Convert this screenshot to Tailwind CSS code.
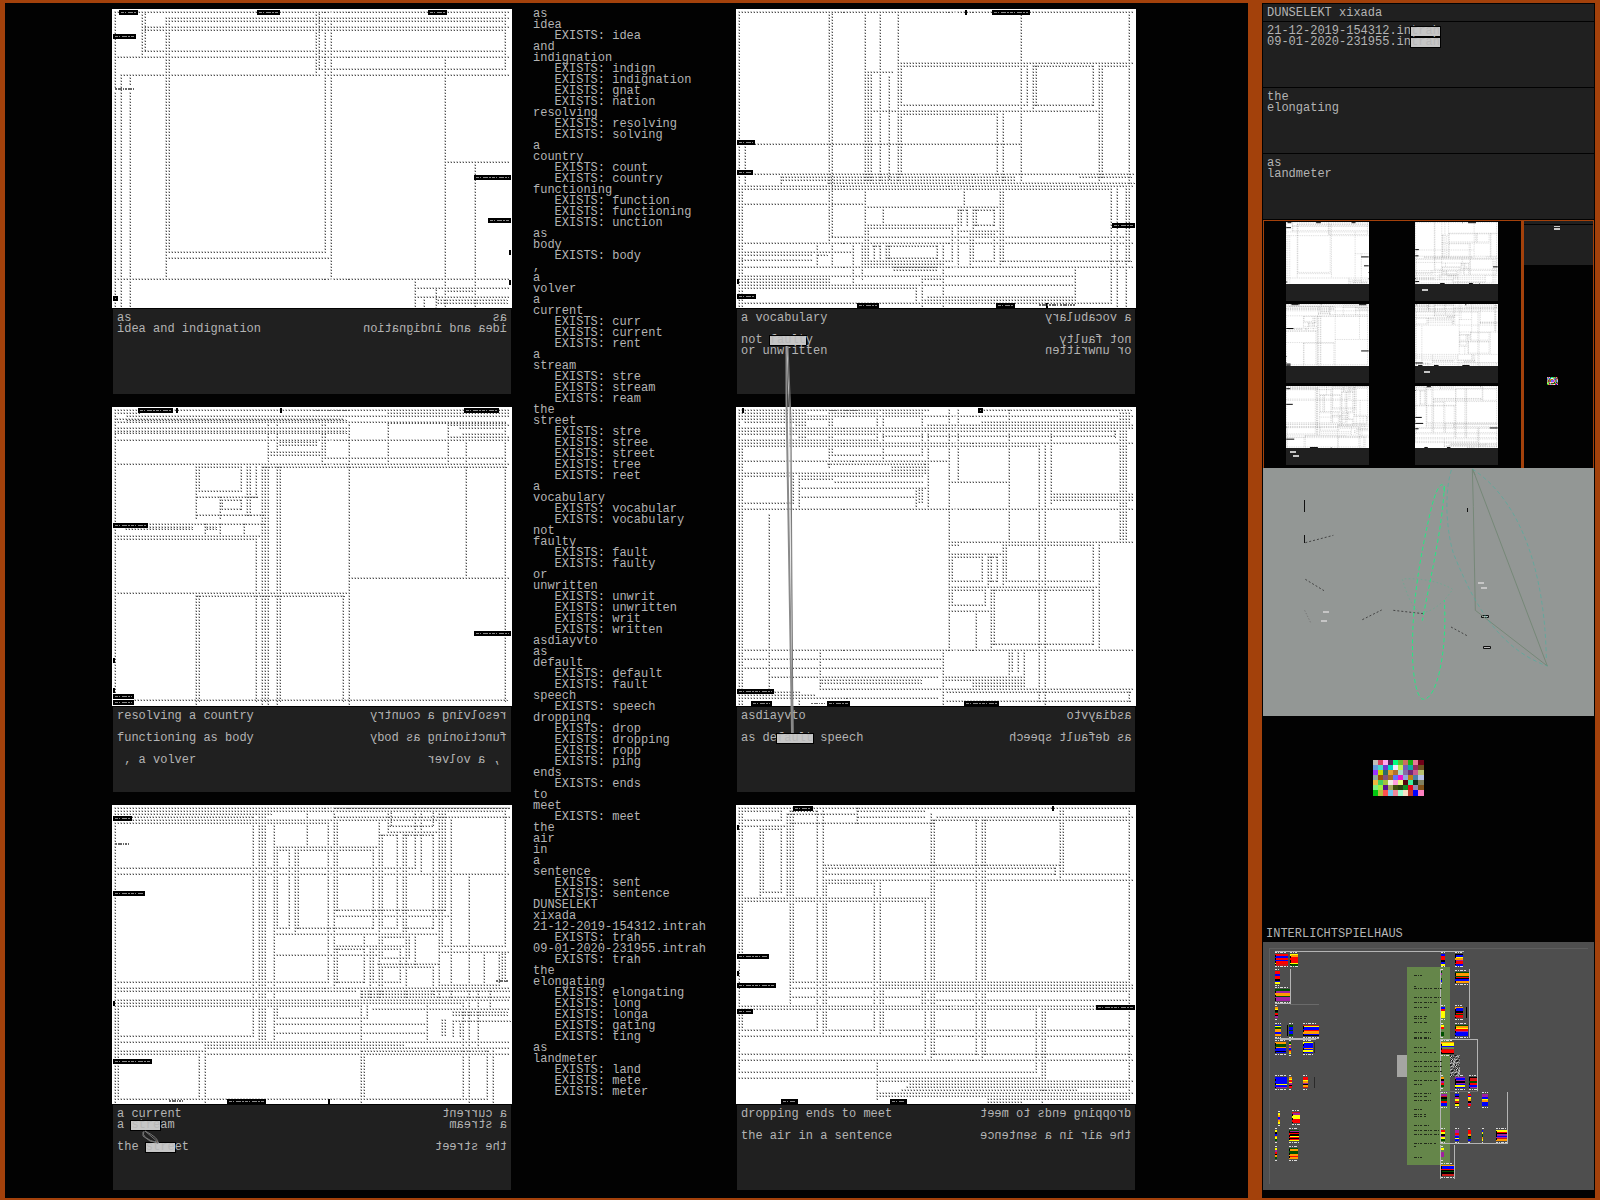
<!DOCTYPE html>
<html lang="en">
<head>
<meta charset="utf-8">
<title>DUNSELEKT xixada</title>
<script src="https://cdn.jsdelivr.net/npm/@tailwindcss/browser@4"></script>
</head>
<body class="bg-[#a3410b] min-h-screen flex gap-[14px] pt-[3px] pb-[2px] pl-[5px] pr-[5px] font-['Liberation_Mono',monospace] text-[12px] leading-[11px] text-[#b4b4b4]">

<main class="relative flex-1 bg-[#020202] flex pt-[6px] pl-[107px]">
  <div class="w-[400px] shrink-0 flex flex-col gap-[13px]">
    <section>
      <svg data-plan="0" class="block w-full h-[299px] bg-white" viewBox="36 27 1200 897"></svg>
      <div class="mt-px mx-px h-[85px] bg-[#202020] p-1 flex justify-between">
<pre class="font-[inherit]">as
idea and indignation</pre>
<pre class="font-[inherit] -scale-x-100">as
idea and indignation</pre>
      </div>
    </section>
    <section>
      <svg data-plan="1" class="block w-full h-[299px] bg-white" viewBox="36 21 1200 897"></svg>
      <div class="mt-px mx-px h-[85px] bg-[#202020] p-1 flex justify-between">
<pre class="font-[inherit]">resolving a country

functioning as body

 , a volver</pre>
<pre class="font-[inherit] -scale-x-100">resolving a country

functioning as body

 , a volver</pre>
      </div>
    </section>
    <section>
      <svg data-plan="2" class="block w-full h-[299px] bg-white" viewBox="36 15 1200 897"></svg>
      <div class="mt-px mx-px h-[85px] bg-[#202020] p-1 flex justify-between">
<pre class="font-[inherit]">a current
a <mark class="inline-block h-[11px] align-top -mx-px px-px border-y border-black outline-1 -outline-offset-1 outline-black bg-[#c6c6c6] text-[#b8b8b8] leading-[9px]">stre</mark>am

the <mark class="inline-block h-[11px] align-top -mx-px px-px border-y border-black outline-1 -outline-offset-1 outline-black bg-[#c6c6c6] text-[#b8b8b8] leading-[9px]">stre</mark>et</pre>
<pre class="font-[inherit] -scale-x-100">a current
a stream

the street</pre>
      </div>
    </section>
  </div>

<pre class="font-[inherit] w-[224px] shrink-0 pl-[21px]">as
idea
   EXISTS: idea
and
indignation
   EXISTS: indign
   EXISTS: indignation
   EXISTS: gnat
   EXISTS: nation
resolving
   EXISTS: resolving
   EXISTS: solving
a
country
   EXISTS: count
   EXISTS: country
functioning
   EXISTS: function
   EXISTS: functioning
   EXISTS: unction
as
body
   EXISTS: body
,
a
volver
a
current
   EXISTS: curr
   EXISTS: current
   EXISTS: rent
a
stream
   EXISTS: stre
   EXISTS: stream
   EXISTS: ream
the
street
   EXISTS: stre
   EXISTS: stree
   EXISTS: street
   EXISTS: tree
   EXISTS: reet
a
vocabulary
   EXISTS: vocabular
   EXISTS: vocabulary
not
faulty
   EXISTS: fault
   EXISTS: faulty
or
unwritten
   EXISTS: unwrit
   EXISTS: unwritten
   EXISTS: writ
   EXISTS: written
asdiayvto
as
default
   EXISTS: default
   EXISTS: fault
speech
   EXISTS: speech
dropping
   EXISTS: drop
   EXISTS: dropping
   EXISTS: ropp
   EXISTS: ping
ends
   EXISTS: ends
to
meet
   EXISTS: meet
the
air
in
a
sentence
   EXISTS: sent
   EXISTS: sentence
DUNSELEKT
xixada
21-12-2019-154312.intrah
   EXISTS: trah
09-01-2020-231955.intrah
   EXISTS: trah
the
elongating
   EXISTS: elongating
   EXISTS: long
   EXISTS: longa
   EXISTS: gating
   EXISTS: ting
as
landmeter
   EXISTS: land
   EXISTS: mete
   EXISTS: meter</pre>

  <div class="w-[400px] shrink-0 flex flex-col gap-[13px]">
    <section>
      <svg data-plan="3" class="block w-full h-[299px] bg-white" viewBox="33 27 1200 897"></svg>
      <div class="mt-px mx-px h-[85px] bg-[#202020] p-1 flex justify-between">
<pre class="font-[inherit]">a vocabulary

not <mark class="inline-block h-[11px] align-top -mx-px px-px border-y border-black outline-1 -outline-offset-1 outline-black bg-[#c6c6c6] text-[#b8b8b8] leading-[9px]">fault</mark>y
or unwritten</pre>
<pre class="font-[inherit] -scale-x-100">a vocabulary

not faulty
or unwritten</pre>
      </div>
    </section>
    <section>
      <svg data-plan="4" class="block w-full h-[299px] bg-white" viewBox="33 21 1200 897"></svg>
      <div class="mt-px mx-px h-[85px] bg-[#202020] p-1 flex justify-between">
<pre class="font-[inherit]">asdiayvto

as de<mark class="inline-block h-[11px] align-top -mx-px px-px border-y border-black outline-1 -outline-offset-1 outline-black bg-[#c6c6c6] text-[#b8b8b8] leading-[9px]">fault</mark> speech</pre>
<pre class="font-[inherit] -scale-x-100">asdiayvto

as default speech</pre>
      </div>
    </section>
    <section>
      <svg data-plan="5" class="block w-full h-[299px] bg-white" viewBox="33 15 1200 897"></svg>
      <div class="mt-px mx-px h-[85px] bg-[#202020] p-1 flex justify-between">
<pre class="font-[inherit]">dropping ends to meet

the air in a sentence</pre>
<pre class="font-[inherit] -scale-x-100">dropping ends to meet

the air in a sentence</pre>
      </div>
    </section>
  </div>

  <!-- strings tying equal fragments together -->
  <svg class="absolute left-0 top-0 w-[1200px] h-[1195px] pointer-events-none" viewBox="5 3 1200 1195" fill="none" stroke-width="1">
    <path d="M786.500 346L786.500 400L792 733" stroke="#8a8a8a" stroke-width="2"/>
    <path d="M787 346L790 430L793 733" stroke="#bdbdbd"/>
    <path d="M788 346L791 420L792 600L793 733" stroke="#777"/>
    <path d="M144 1131Q140 1138 158 1143Q159 1138 145 1131M145 1131L159 1143M143 1132V1136L150 1141L158 1143" stroke="#777"/>
  </svg>
</main>

<aside class="w-[333px] shrink-0 bg-[#020202] border border-[#020202] flex flex-col">
  <h1 class="h-[17px] bg-[#202020] pl-1 pt-1 font-normal">DUNSELEKT xixada</h1>
<pre class="font-[inherit] mt-px h-[65px] bg-[#202020] pl-1 pt-1">21-12-2019-154312.in<mark class="inline-block h-[11px] align-top -mx-px px-px border-y border-black outline-1 -outline-offset-1 outline-black bg-[#c6c6c6] text-[#b8b8b8] leading-[9px]">trah</mark>
09-01-2020-231955.in<mark class="inline-block h-[11px] align-top -mx-px px-px border-y border-black outline-1 -outline-offset-1 outline-black bg-[#c6c6c6] text-[#b8b8b8] leading-[9px]">trah</mark></pre>
<pre class="font-[inherit] mt-px h-[65px] bg-[#202020] pl-1 pt-1">the
elongating</pre>
<pre class="font-[inherit] mt-px h-[65px] bg-[#202020] pl-1 pt-1">as
landmeter</pre>

  <div class="mt-px h-[248px] border border-b-0 border-[#a3410b] flex">
    <div class="flex-1 flex pl-[22px] gap-[46px] pt-px" id="minis">
      <div class="w-[83px] flex flex-col gap-[3px]" data-col="0"></div>
      <div class="w-[83px] flex flex-col gap-[3px]" data-col="3"></div>
    </div>
    <div class="w-[72px] border-l-3 border-[#a3410b]">
      <svg class="block w-[69px] h-[246px]" viewBox="0 0 207 738" shape-rendering="crispEdges">
        <path fill="#202020" d="M0 0h207v9H0zM0 12h207v120H0z"/>
        <path fill="#c8c8c8" d="M90 15h18v3H90zM90 21h18v6H90z"/>
        <g id="dots"></g>
      </svg>
    </div>
  </div>

  <svg class="block h-[248px] w-full bg-[#939795]" viewBox="69 24 993 744" fill="none">
    <g stroke="#111" stroke-width="3">
      <path d="M193.500 120V156M193.500 225V249M682.500 144V156"/>
      <path stroke="#444" stroke-dasharray="6 6" d="M196 248L280 226M196 358L252 392M367 479L425 450M633 501L681 527M460 451L550 461"/>
      <path stroke="#777" stroke-dasharray="4 5" d="M194 451L212 488"/>
      <path fill="#bbb" d="M724.500 466.500h21v6h-21zM730.500 559.500h21v6h-21z"/>
    </g>
    <path fill="#c6c6c6" d="M249 453h18v6h-18zM243 480h18v6h-18zM714 366h18v6h-18zM723 381h18v6h-18z"/>
    <path stroke="#768878" stroke-width="3" d="M698 27L922 618L706 451L700 140L697 27L705 45"/>
    <g stroke="#4fae9f" stroke-width="2" stroke-dasharray="12 8">
      <path d="M697 27C840 120 915 330 919 600M634 30C610 110 622 220 640 280C690 400 760 560 922 618"/>
      <path stroke="#62ac91" stroke-dasharray="5 7" d="M487 358C500 400 520 460 550 458C590 450 620 415 638 388C610 370 550 352 487 357"/>
    </g>
    <g stroke="#25e884" stroke-width="3" stroke-dasharray="12 8">
      <path d="M613 95C612 60 595 65 575 140C525 350 515 480 518 600C523 690 538 718 551 718C590 716 622 580 613 420"/>
      <path d="M613 78C608 200 570 360 547 482"/>
    </g>
  </svg>

  <div class="relative h-[226px]">
    <svg class="absolute left-[110px] top-[44px] w-[51px] h-[36px]" viewBox="0 0 51 36" shape-rendering="crispEdges" id="palette"></svg>
    <h2 class="absolute left-[3px] bottom-[2px] font-normal leading-[11px]">INTERLICHTSPIELHAUS</h2>
  </div>

  <svg class="block h-[248px] w-full bg-[#4e4e4e]" viewBox="69 66 993 744" shape-rendering="crispEdges" fill="none" id="map">
    <path stroke="#5e5e5e" stroke-width="3" d="M88.500 792V85.500H1044"/>
    <path fill="#65864a" d="M501 141h129v594H501z"/>
    <path fill="#a5a5a3" d="M471 405h30v66h-30z"/>
    <path stroke="#b4b4b4" stroke-width="3" d="M105 94.500H672M151.500 147V250.500H105M601.500 147V354M688.500 147V354M712.500 513V358.500H601.500V513M601.500 516V670.500H802.500V516M601.500 675V777M643.500 675V777M105 355.500H237M120 358.500H228"/>
    <path stroke="#6a6a6a" stroke-width="3" d="M150 253.500H237M603 514.500H714"/>
    <path stroke="#000" stroke-width="3" d="M142.500 315V348M679.500 261V294"/>
    <path stroke="#2a2a2a" stroke-width="3" d="M223.500 366V399M223.500 471V504"/>
  </svg>
</aside>

<script>
// Floor plans: h = [y, x1, x2], v = [x, y1, y2], tags = [x, y, width]; three units per pixel.
const plans = [
{h:[[36,45,1227],[54,198,1227],[62,198,1215],[81,126,1227],[90,134,1215],[153,134,1215],[171,45,1227],[207,656,1215],[225,63,660],[225,675,1227],[486,1035,1227],[755,207,675],[774,198,693],[837,45,1227],[864,945,1227],[873,1035,1125],[891,945,1227],[899,1015,1218],[909,1015,1218]],
 v:[[45,36,260],[45,280,920],[63,225,920],[90,225,255],[90,280,920],[126,36,165],[134,42,153],[198,63,830],[207,63,755],[648,36,220],[656,42,207],[675,63,755],[693,54,830],[1035,171,920],[1125,486,920],[1215,36,207],[945,837,920],[972,891,920],[1008,870,920]],
 tags:[[57,30,57],[471,30,69],[984,30,57],[39,102,69],[1122,525,110],[1164,654,68],[1227,750,6],[1227,840,6],[39,888,15]],tiny:[[45,267,60]]},
{h:[[31,45,1227],[39,45,120],[39,865,1227],[48,81,1227],[57,50,730],[60,81,735],[66,45,1215],[69,865,1215],[75,1045,1227],[84,45,745],[84,1080,1215],[93,45,735],[100,45,735],[102,1090,1215],[111,1045,1227],[121,45,1227],[127,540,650],[136,540,650],[156,504,670],[165,504,660],[174,675,1215],[192,45,1227],[200,490,1215],[272,297,423],[291,290,470],[299,367,423],[327,367,423],[346,290,490],[373,150,490],[381,78,272],[388,78,272],[381,320,345],[388,320,345],[408,45,490],[416,45,470],[535,747,1227],[579,45,747],[588,290,730],[901,105,1218],[200,297,423],[290,450,468]],
 v:[[45,31,915],[288,200,357],[288,588,915],[297,588,900],[468,416,900],[486,192,915],[495,200,900],[504,66,180],[504,200,915],[531,66,165],[531,200,915],[540,200,900],[729,588,900],[747,66,915],[864,66,192],[1044,66,192],[1098,121,530],[1215,66,900],[666,66,192],[675,75,174],[360,291,357],[441,200,346],[297,200,272],[423,200,272],[450,200,346],[468,200,290],[367,299,327],[423,299,327],[315,373,400],[360,373,400],[432,373,400]],
 tags:[[114,24,105],[228,24,6],[540,24,6],[1092,24,105],[39,369,105],[1122,693,110],[39,774,6],[39,864,6],[39,883,63],[39,900,63]],tiny:[[640,31,100]]},
{h:[[24,45,1227],[24,705,1227],[32,45,1215],[43,45,510],[50,95,460],[50,705,1227],[60,45,1035],[68,45,685],[78,870,1000],[96,865,1020],[104,843,890],[104,915,1000],[142,522,835],[150,530,567],[150,594,820],[204,45,945],[222,45,1227],[329,709,1035],[348,702,1050],[384,530,567],[384,592,820],[384,845,890],[384,915,1000],[402,522,1020],[411,845,930],[438,702,915],[438,1025,1215],[447,709,790],[447,820,900],[456,1018,1227],[465,522,835],[473,845,930],[493,835,1015],[501,845,1000],[546,45,685],[546,709,790],[546,820,900],[555,1018,1200],[564,45,1227],[572,45,765],[573,785,1227],[582,785,1000],[591,785,1227],[600,45,1227],[608,45,1090],[618,45,785],[627,820,1227],[636,1060,1218],[645,1060,1218],[654,530,800],[663,1060,1227],[672,522,985],[699,522,985],[708,55,460],[726,45,1227],[735,315,910],[744,315,1227],[753,45,315],[753,785,1165],[762,55,297],[762,315,1227],[896,55,1165]],
 v:[[45,24,910],[53,610,896],[459,50,708],[477,43,720],[486,43,720],[495,43,720],[522,60,720],[531,150,384],[531,608,654],[567,150,384],[585,142,400],[594,150,384],[621,32,142],[684,68,546],[702,43,555],[711,60,329],[711,447,546],[792,402,546],[810,447,590],[819,150,384],[819,447,546],[837,60,590],[846,104,384],[846,411,473],[846,501,580],[864,32,96],[873,40,78],[891,104,384],[900,447,546],[909,104,402],[918,104,600],[927,411,473],[945,32,204],[945,402,490],[963,32,220],[999,40,78],[999,104,384],[999,501,580],[1018,32,600],[1026,32,438],[1035,32,329],[1053,60,600],[1107,222,910],[1152,456,555],[1197,456,555],[1206,462,540],[1215,32,438],[1215,462,540],[1089,608,896],[783,564,910],[792,762,896],[801,608,654],[315,735,910],[297,762,896],[1161,753,896],[1179,753,910],[981,608,720],[1134,573,740],[1035,660,708],[1026,660,708],[1060,672,708],[1080,672,708],[1170,573,625]],
 tags:[[39,47,57],[39,273,95],[39,603,6],[39,777,116],[382,897,115],[685,897,6]],tiny:[[45,131,42],[207,903,42],[1188,543,36]]},
{h:[[36,42,1225],[189,519,1225],[198,528,905],[198,930,1105],[198,1130,1215],[216,420,505],[315,528,905],[315,930,1105],[333,420,1120],[342,528,815],[432,90,885],[522,90,1225],[531,175,870],[531,1065,1215],[540,175,870],[549,310,1225],[558,42,1225],[566,50,1160],[612,50,420],[621,420,830],[630,705,727],[630,750,805],[675,420,700],[675,750,805],[684,428,682],[693,700,830],[702,745,805],[711,320,1205],[729,42,1225],[737,445,465],[737,490,637],[756,42,380],[765,50,260],[765,280,303],[780,50,260],[773,490,637],[783,428,682],[783,745,805],[783,832,1215],[792,420,655],[801,42,1225],[800,508,637],[810,508,637],[828,42,1050],[836,42,315],[846,42,315],[837,590,655],[855,42,1050],[864,42,575],[891,608,1050],[900,590,1050],[908,42,1160]],
 v:[[42,36,920],[51,566,920],[312,36,725],[320,42,711],[420,36,540],[420,566,790],[429,216,540],[438,216,540],[465,36,540],[492,230,540],[519,36,540],[528,198,315],[528,342,522],[60,432,550],[474,621,675],[168,531,550],[276,729,795],[321,729,795],[384,729,860],[411,729,835],[429,684,783],[447,737,783],[465,737,783],[483,729,795],[492,737,773],[573,864,908],[591,837,920],[637,737,773],[655,729,920],[682,684,783],[699,621,790],[709,630,675],[727,630,675],[717,566,621],[735,693,795],[744,621,693],[744,702,783],[753,630,675],[807,630,675],[807,702,783],[816,342,522],[825,558,795],[834,342,540],[834,566,783],[888,36,540],[906,198,315],[924,189,325],[933,198,315],[1104,198,315],[1122,189,540],[1130,198,531],[1158,566,908],[1176,566,920],[1203,566,920],[1212,36,783],[1050,801,900]],
 tags:[[720,30,6],[800,30,115],[36,420,53],[36,510,48],[1161,669,68],[36,836,6],[36,882,57],[396,909,66],[813,909,57],[963,909,6]],tiny:[[942,915,108]]},
{h:[[31,42,612],[31,778,1215],[39,42,225],[39,320,460],[39,475,590],[48,42,1225],[57,42,310],[66,60,215],[66,770,1215],[75,610,1225],[84,42,1225],[93,42,1170],[101,42,455],[109,475,590],[109,610,1170],[120,42,460],[129,42,1225],[137,50,940],[165,320,590],[183,50,672],[192,310,600],[201,500,600],[210,500,600],[219,42,600],[228,50,205],[228,222,590],[237,222,325],[246,330,590],[246,672,850],[265,222,610],[292,222,570],[308,50,205],[327,42,1225],[283,978,1225],[292,978,1225],[300,978,1225],[426,672,1225],[435,680,700],[435,843,1105],[463,672,835],[471,680,770],[471,795,815],[543,680,770],[543,795,815],[543,843,1105],[561,672,1120],[570,680,780],[570,805,1105],[615,680,780],[633,672,800],[732,805,1105],[750,42,1225],[777,42,655],[804,42,655],[831,132,640],[831,655,900],[840,290,585],[849,290,585],[840,655,900],[849,745,900],[858,745,900],[867,285,1225],[876,50,220],[876,665,1215],[885,50,270],[894,50,640],[902,665,1215]],
 v:[[42,31,915],[51,137,915],[132,345,867],[204,228,308],[213,39,84],[222,39,110],[222,228,320],[222,876,915],[231,31,110],[240,31,110],[312,31,205],[321,39,165],[456,39,110],[474,31,180],[591,39,165],[285,759,867],[573,265,320],[582,270,308],[591,270,308],[610,84,320],[600,183,219],[672,31,745],[699,31,245],[753,633,745],[771,471,543],[789,463,561],[798,471,543],[816,471,543],[680,471,543],[680,570,615],[780,570,615],[798,561,745],[807,570,732],[834,426,555],[843,435,543],[852,31,426],[852,750,831],[861,759,815],[879,759,815],[897,759,867],[942,137,902],[960,129,915],[978,84,310],[1104,435,543],[1104,570,732],[1122,426,745],[1170,93,109],[1185,39,426],[1194,39,426],[1203,39,426],[1212,39,84],[1212,876,902],[655,759,915]],
 tags:[[50,24,6],[759,24,15],[36,867,110],[78,903,63],[307,903,67],[717,903,105]],tiny:[[315,31,90],[258,910,42]]},
{h:[[23,42,1215],[32,50,168],[32,200,275],[32,400,600],[42,190,395],[50,400,600],[50,635,1225],[60,50,168],[60,625,755],[60,778,1005],[60,1013,1215],[69,200,620],[78,42,190],[87,113,168],[195,300,1000],[204,302,990],[222,302,990],[222,1013,1215],[240,294,1225],[249,302,447],[275,113,168],[294,42,620],[303,42,600],[546,204,1215],[555,465,1225],[564,195,1225],[573,600,1215],[591,195,590],[600,600,1215],[618,42,1225],[626,50,935],[626,960,1215],[690,50,275],[690,302,447],[690,475,1215],[708,42,1225],[762,42,600],[762,625,755],[762,778,1215],[780,42,1225],[816,42,935],[834,42,950],[843,456,1225],[852,555,1055],[852,1058,1215],[861,545,1055],[861,1058,1215],[870,530,1055],[879,456,1225],[888,456,1215],[897,790,1215],[906,790,890]],
 v:[[42,23,815],[51,32,460],[51,626,690],[105,87,290],[113,87,275],[168,32,60],[168,87,275],[186,42,290],[195,32,605],[204,32,546],[276,32,690],[294,23,700],[303,204,222],[303,249,690],[395,23,69],[447,249,690],[465,240,700],[474,564,690],[600,303,762],[618,42,775],[627,60,762],[753,60,762],[771,50,775],[780,60,762],[933,626,816],[951,618,910],[960,626,897],[1005,23,235],[1013,32,222],[1212,23,897],[456,780,897],[591,564,615],[990,204,222]],
 tags:[[204,18,59],[982,18,6],[36,74,6],[36,462,95],[36,513,6],[36,549,116],[36,627,48],[1113,615,116],[168,897,50],[495,897,50]],tiny:[]}
];
const snap = n => Math.round(n / 3) * 3;
function lines(p) {
  return p.h.map(([y, a, b]) => `M${snap(a) - 3} ${snap(y)}H${snap(b) + 3}`).join('') +
         p.v.map(([x, a, b]) => `M${snap(x)} ${snap(a) - 3}V${snap(b) + 3}`).join('');
}
function draw(p, ox) {
  const d = lines(p);
  let s = `<g shape-rendering="crispEdges" fill="none"><g transform="translate(${ox} 0)">
    <path d="${d}" stroke="#d0d0d0" stroke-width="6" stroke-dasharray="6 3"/>
    <path d="${d}" transform="translate(1.5 1.5)" stroke="#505050" stroke-width="3" stroke-dasharray="3 6"/></g>`;
  for (const [x, y, w] of p.tags) {
    s += `<path fill="#000" d="M${x} ${snap(y)}h${w}v15h-${w}z"/>`;
    if (w > 12) s += `<path stroke="#888" stroke-width="3" stroke-dasharray="9 3 3 6 15 3 6 3" d="M${x + 6} ${snap(y) + 7.5}h${w - 12}"/>`;
  }
  for (const [x, y, w] of p.tiny) s += `<path stroke="#666" stroke-width="5" stroke-dasharray="6 3 12 3 3 4" d="M${x} ${y}h${w}"/>`;
  return s + '</g>';
}
document.querySelectorAll('[data-plan]').forEach(e => { const i = +e.dataset.plan; e.innerHTML = draw(plans[i], 0); });

// Miniature of the whole screen
const hits = {2: [[4,3],[7,7]], 3: [[7,5]], 4: [[9,5]]};
document.querySelectorAll('[data-col]').forEach(col => {
  const c = +col.dataset.col;
  for (let i = c; i < c + 3; i++) {
    const p = plans[i], ox = c ? 33 : 36, oy = 27 - (i - c) * 6;
    const tags = p.tags.map(([x, y, w]) => `<path fill="#000" d="M${x} ${y}h${w}v14h-${w}z"/>`).join('');
    const marks = (hits[i] || []).map(([x, y]) => `<rect x="${x}" y="${y}" width="6" height="2" fill="#c6c6c6"/>`).join('');
    col.insertAdjacentHTML('beforeend', `<div><svg class="block w-full h-[62px] bg-white" viewBox="${ox} ${oy} 1200 897" preserveAspectRatio="none"><path fill="none" stroke="#000" stroke-opacity=".3" stroke-width="7" stroke-dasharray="14 12" d="${lines(p)}"/>${tags}</svg><svg class="block w-full h-[17px] bg-[#202020]" viewBox="0 0 83 17">${marks}</svg></div>`);
  }
});

// Colour table
const colors = `c0c0b8 d93f60 ffaaf0 55205a 00ff80 66b82e cc6e60 1aaf10 e87898 700018
6699dd 44ddcc 6a3ad0 00d8c0 f0e8ff c0f050 7060b8 10aaa0 982860 6b5020
9933ff c8dd00 306868 e0a030 b07030 a8e0cc 8868a8 702878 c85890 b8c070
90a8a0 a05000 805080 a86a20 6070ff f010d0 90a8e0 c08010 4880a8 b8c0e8
f0b840 40d060 a0c040 f0f0e8 ffa0e0 e8ff80 580810 40f0a0 103020 808060
80f080 a0f040 581090 a8a860 405010 284010 109020 f00018 9088b8 805018
00c810 b8c040 ff5050 70c8f0 f08898 98ffd0 f8e0c8 c03830 0000ff ff80c0`.split(/\s+/);
document.getElementById('palette').innerHTML = colors.map((c, i) => `<rect x="${i % 10 * 5}" y="${Math.floor(i / 10) * 5}" width="${i % 10 === 9 ? 6 : 5}" height="${i > 59 ? 6 : 5}" fill="#${c}"/>`).join('');
document.getElementById('dots').innerHTML = colors.map((c, i) => `<rect x="${69 + i % 10 * 3.3}" y="${468 + Math.floor(i / 10) * 3.4}" width="4" height="4" fill="#${c}"/>`).join('');

// Striped houses on the map: [x, y, width, height, stripes]
const ink = {r:'#f00', b:'#00f', y:'#ff0', k:'#000', o:'#f90', g:'#005000', p:'#a020a0', R:'#c81818', G:'#65864a'};
const houses = [[105,102,39,34,'rrbbrrbrryrR'],[150,102,24,34,'yorrrryg'],[105,153,15,39,'rrbrrkby'],[105,208,45,34,'gppoogppp'],[105,261,9,32,'oykgrkp'],[105,315,18,33,'bygoooboo'],[147,315,12,33,'gbbgbbg'],[189,315,48,33,'Rybbroobk'],[105,366,33,33,'ooggobbkb'],[147,366,6,36,'gypobroy'],[189,366,30,33,'ybbbobyb'],[105,471,36,33,'bbbbbybp'],[147,471,9,33,'oyrypkr'],[189,471,15,33,'rryopkoR'],[114,580,6,32,'yobpoy'],[156,576,24,33,'Rpyyyrrr'],[105,630,6,33,'ykboyg'],[147,630,30,33,'gpkrkyrkry'],[105,684,6,33,'yprkog'],[147,684,27,33,'googgooroo'],
[603,102,12,34,'brrrkby'],[645,102,24,34,'kbyoprrb'],[603,153,3,33,'gpGgb'],[645,156,42,33,'googrkboo'],[603,261,12,33,'bryyyy'],[645,261,24,33,'obbkrgrR'],[603,315,9,33,'yrGgg'],[645,315,39,33,'goyrpbbb'],[603,366,39,36,'oyybGRrrk'],[603,471,9,30,'okprg'],[645,471,30,33,'pbpkpbyb'],[687,471,24,33,'kRrgrrbp'],[603,522,18,36,'pRkgrbb'],[645,522,12,36,'bkpyRky'],[684,522,9,36,'rbyokpr'],[726,522,18,36,'ppbyobbb'],[603,630,12,33,'rykpyg'],[645,630,12,33,'pprpbyb'],[684,630,9,33,'rrokgb'],[726,630,3,33,'bygoy'],[768,630,33,33,'yyrkpbpRoo'],[603,684,9,33,'yGppG'],[603,735,39,33,'obbrkgkRR']];
let m = '';
for (const [x, y, w, h, s] of houses) {
  const t = h / s.length;
  m += `<rect x="${x}" y="${y}" width="${w}" height="${h}" fill="#000"/>`;
  [...s].forEach((c, i) => m += `<rect x="${x + (w > 20 && i % 3 ? 3 : 0)}" y="${y + i * t}" width="${w - (w > 20 && i % 3 ? 3 : 0)}" height="${t + .5}" fill="${ink[c]}"/>`);
  m += `<path stroke="#ddd" stroke-width="3" stroke-dasharray="6 3 3 3 9 4" d="M${x} ${y - 4.5}h${w * .8 + 3}M${x} ${y + h + 4.5}h${w}"/>`;
}
const notes = [[165,24],[199,6],[205,84],[232,80],[247,70],[261,45],[289,40],[295,36],[307,42],[336,50],[351,48],[355,50],[382,36],[397,66],[424,84],[439,90],[454,84],[481,72],[493,30],[520,50],[528,40],[541,50],[568,30],[583,36],[589,36],[616,44],[631,78],[643,76],[670,66],[679,6],[712,24]];
for (const [y, w] of notes) m += `<path stroke="#222b1a" stroke-width="3" stroke-dasharray="9 3 3 4 6 5" d="M522 ${y}h${w}"/>`;
for (let i = 0; i < 220; i++) { const g = (i * 73 + i * i * 31) % 190 + 20; m += `<rect x="${630 + i % 10 * 3}" y="${405 + Math.floor(i / 10) * 3}" width="3" height="3" fill="rgb(${g},${g},${g})"/>`; }
document.getElementById('map').insertAdjacentHTML('beforeend', m);
</script>
</body>
</html>
